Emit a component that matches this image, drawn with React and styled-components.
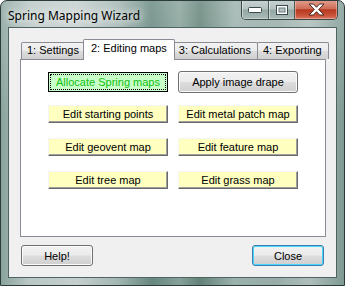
import React, { useState } from 'react'
import styled, { createGlobalStyle } from 'styled-components'

const GlobalStyle = createGlobalStyle`
  html, body {
    margin: 0;
    padding: 0;
    background: #ffffff;
  }
`

const tabs = ['1: Settings', '2: Editing maps', '3: Calculations', '4: Exporting']

const mapButtons = [
  'Edit starting points',
  'Edit metal patch map',
  'Edit geovent map',
  'Edit feature map',
  'Edit tree map',
  'Edit grass map',
]

export default function App() {
  const [active, setActive] = useState(1)

  return (
    <>
      <GlobalStyle />
      <Window>
        <TitleBar>
          <Title>Spring Mapping Wizard</Title>
          <Captions>
            <CapButton $w={26}>
              <svg width="14" height="6" viewBox="0 0 14 6">
                <rect x="0.5" y="0.5" width="13" height="5" rx="1" fill="#fff" stroke="#3a4a4a" />
              </svg>
            </CapButton>
            <CapButton $w={25}>
              <svg width="12" height="10" viewBox="0 0 12 10">
                <rect x="0.5" y="0.5" width="11" height="9" fill="#fff" stroke="#3a4a4a" />
                <rect x="3" y="3" width="6" height="4" fill="#b8c4c4" stroke="#6a7a7a" />
              </svg>
            </CapButton>
            <CloseCap>
              <svg width="17" height="13" viewBox="0 0 17 13">
                <path
                  d="M1 1h4.5l3 3.3 3-3.3H16l-5.3 5.5L16 12h-4.5l-3-3.3-3 3.3H1l5.3-5.5z"
                  fill="#fff"
                  stroke="#4a2820"
                  strokeWidth="1"
                  strokeLinejoin="round"
                />
              </svg>
            </CloseCap>
          </Captions>
        </TitleBar>

        <Client>
          <TabStrip>
            {tabs.map((t, i) => (
              <Tab key={t} $active={i === active} onClick={() => setActive(i)}>
                {t}
              </Tab>
            ))}
          </TabStrip>
          <Panel>
            <ButtonGrid>
              <FocusButton>
                <span>Allocate Spring maps</span>
              </FocusButton>
              <AeroButton $wide>Apply image drape</AeroButton>
              {mapButtons.map((b) => (
                <YellowButton key={b}>{b}</YellowButton>
              ))}
            </ButtonGrid>
          </Panel>
          <Footer>
            <AeroButton>Help!</AeroButton>
            <AeroButton $default>Close</AeroButton>
          </Footer>
        </Client>
      </Window>
    </>
  )
}

const Window = styled.div`
  width: 345px;
  height: 286px;
  box-sizing: border-box;
  display: flex;
  flex-direction: column;
  border: 1px solid #2b3a3a;
  border-radius: 7px 7px 0 0;
  overflow: hidden;
  background:
    linear-gradient(180deg, rgba(255,255,255,0.18) 0%, rgba(255,255,255,0) 40%),
    linear-gradient(90deg, #8aa39d 0%, #b9c7c4 8%, #c5cfcd 22%, #a3b6b2 34%, #66877e 44%, #86a199 52%, #628278 58%, #9bb1ab 68%, #97aca6 80%, #aebdba 90%, #7f9a93 100%);
  font-family: Tahoma, 'Liberation Sans', Arial, sans-serif;
`

const TitleBar = styled.div`
  height: 26px;
  display: flex;
  align-items: flex-start;
  flex-shrink: 0;
`

const Title = styled.div`
  flex: 1;
  padding: 6px 0 0 7px;
  font-family: 'Noto Sans', 'Open Sans', sans-serif;
  font-size: 12px;
  color: #000;
  text-shadow: 0 0 6px #eef2f1, 0 0 10px #eef2f1;
`

const Captions = styled.div`
  display: flex;
  margin-right: 6px;
  margin-top: -1px;
  height: 19px;
  border: 1px solid #3a4848;
  border-top: none;
  border-radius: 0 0 5px 5px;
  overflow: hidden;
`

const CapButton = styled.div`
  width: ${(p) => p.$w}px;
  display: flex;
  align-items: center;
  justify-content: center;
  border-right: 1px solid #4c5d5c;
  box-shadow: inset 1px 0 0 rgba(255,255,255,0.45), inset 0 -1px 0 rgba(255,255,255,0.35);
  background: linear-gradient(180deg, #c9d3d2 0%, #b3c1bf 48%, #94a8a4 52%, #a9bab7 100%);
`

const CloseCap = styled.div`
  width: 42px;
  display: flex;
  align-items: center;
  justify-content: center;
  box-shadow: inset 0 0 0 1px rgba(255,200,190,0.5);
  background: linear-gradient(180deg, #e2a091 0%, #cf6e56 45%, #b7381f 52%, #c9523a 80%, #d9785f 100%);
`

const Client = styled.div`
  flex: 1;
  margin: 0 7px 7px;
  box-sizing: border-box;
  border: 1px solid #4f6462;
  background: #f0f0f0;
  padding: 11px 10px 0 11px;
  display: flex;
  flex-direction: column;
`

const TabStrip = styled.div`
  height: 20px;
  display: flex;
  align-items: flex-end;
  padding-left: 1px;
  font-size: 11px;
`

const Tab = styled.div`
  box-sizing: border-box;
  height: ${(p) => (p.$active ? '21px' : '17px')};
  margin: ${(p) => (p.$active ? '0 -2px -1px -2px' : '0 -1px 0 0')};
  padding: ${(p) => (p.$active ? '2px 7px 0' : '1px 6px 0 5px')};
  position: relative;
  z-index: ${(p) => (p.$active ? 2 : 1)};
  border: 1px solid #898c95;
  border-bottom: none;
  border-radius: 2px 2px 0 0;
  background: ${(p) =>
    p.$active ? '#ffffff' : 'linear-gradient(180deg, #f2f2f2 0%, #ebebeb 50%, #dddddd 51%, #cfcfcf 100%)'};
  color: #000;
  white-space: nowrap;
  cursor: default;
`

const Panel = styled.div`
  height: 178px;
  box-sizing: border-box;
  border: 1px solid #898c95;
  background: #ffffff;
  padding: 12px 0 0 27px;
`

const ButtonGrid = styled.div`
  display: grid;
  grid-template-columns: 120px 120px;
  grid-auto-rows: 18px;
  column-gap: 10px;
  row-gap: 15px;
  align-items: start;
  font-size: 11px;
`

const FocusButton = styled.div`
  box-sizing: border-box;
  height: 20px;
  border: 1px solid #000;
  background: #c8ffc8;
  padding: 1px;
  display: flex;
  span {
    flex: 1;
    display: flex;
    align-items: center;
    justify-content: center;
    border: 1px dotted #000;
    color: #10c010;
  }
`

const AeroButton = styled.div`
  box-sizing: border-box;
  width: ${(p) => (p.$wide ? '120px' : '72px')};
  height: ${(p) => (p.$wide ? '22px' : '21px')};
  margin-top: ${(p) => (p.$wide ? '-1px' : '0')};
  display: flex;
  align-items: center;
  justify-content: center;
  border: 1px solid ${(p) => (p.$default ? '#3c7fb1' : '#707070')};
  border-radius: 3px;
  color: #000;
  font-size: 11px;
  box-shadow: inset 0 0 0 1px ${(p) => (p.$default ? '#48d5fb' : '#fbfbfb')};
  background: linear-gradient(180deg, #f2f2f2 0%, #ebebeb 48%, #dddddd 52%, #cfcfcf 100%);
`

const YellowButton = styled.div`
  box-sizing: border-box;
  height: 18px;
  display: flex;
  align-items: center;
  justify-content: center;
  background: #ffffc0;
  color: #000;
  border-top: 1px solid #f4f4f4;
  border-left: 1px solid #f4f4f4;
  border-right: 1px solid #696969;
  border-bottom: 1px solid #696969;
  box-shadow: inset -1px -1px 0 #a0a0a0;
`

const Footer = styled.div`
  display: flex;
  justify-content: space-between;
  margin-top: 8px;
  padding: 0 2px 0 1px;
`
